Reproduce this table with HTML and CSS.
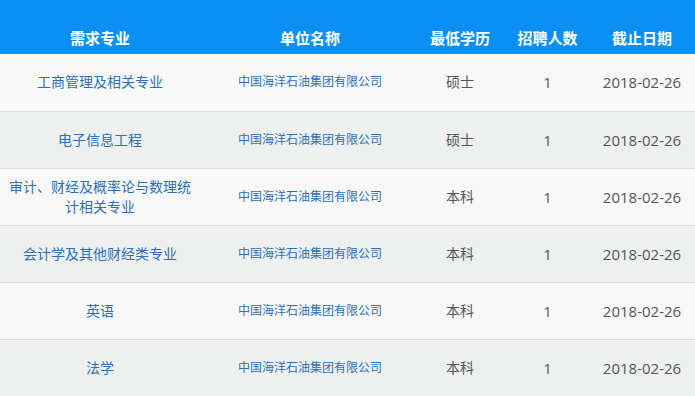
FILE: index.html
```html
<!DOCTYPE html>
<html lang="zh">
<head>
<meta charset="utf-8">
<link rel="stylesheet" href="styles.css">
</head>
<body>
<table class="jobs">
  <colgroup>
    <col class="c1"><col class="c2"><col class="c3"><col class="c4"><col class="c5">
  </colgroup>
  <thead>
    <tr><th>需求专业</th><th>单位名称</th><th>最低学历</th><th>招聘人数</th><th class="date">截止日期</th></tr>
  </thead>
  <tbody>
    <tr><td class="major">工商管理及相关专业</td><td class="org">中国海洋石油集团有限公司</td><td>硕士</td><td class="num">1</td><td class="date">2018-02-26</td></tr>
    <tr><td class="major">电子信息工程</td><td class="org">中国海洋石油集团有限公司</td><td>硕士</td><td class="num">1</td><td class="date">2018-02-26</td></tr>
    <tr><td class="major">审计、财经及概率论与数理统计相关专业</td><td class="org">中国海洋石油集团有限公司</td><td>本科</td><td class="num">1</td><td class="date">2018-02-26</td></tr>
    <tr><td class="major">会计学及其他财经类专业</td><td class="org">中国海洋石油集团有限公司</td><td>本科</td><td class="num">1</td><td class="date">2018-02-26</td></tr>
    <tr><td class="major">英语</td><td class="org">中国海洋石油集团有限公司</td><td>本科</td><td class="num">1</td><td class="date">2018-02-26</td></tr>
    <tr><td class="major">法学</td><td class="org">中国海洋石油集团有限公司</td><td>本科</td><td class="num">1</td><td class="date">2018-02-26</td></tr>
  </tbody>
</table>
</body>
</html>
```
FILE: styles.css
```css
html, body {
  margin: 0;
  padding: 0;
  background: #eeefef;
}
body {
  font-family: "Open Sans", "Noto Sans CJK SC", sans-serif;
  font-size: 14px;
  color: #555;
}
.jobs {
  width: 695px;
  border-collapse: collapse;
  table-layout: fixed;
}
.c1 { width: 200px; }
.c2 { width: 220px; }
.c3 { width: 80px; }
.c4 { width: 95px; }
.c5 { width: 100px; }
.jobs th {
  background: #0a8ff7;
  color: #fff;
  font-weight: bold;
  font-size: 15px;
  line-height: 20px;
  height: 54px;
  box-sizing: border-box;
  padding: 28px 0 6px;
  text-align: center;
  vertical-align: middle;
}
.jobs td {
  height: 57px;
  padding: 0 6px;
  text-align: center;
  vertical-align: middle;
  line-height: 20px;
  border-top: 1px solid #dcdcdc;
  box-sizing: border-box;
}
.jobs th.date, .jobs td.date { padding-right: 6px; padding-left: 0; }
.jobs td.date, .jobs td.num { font-size: 15px; }
.jobs tbody tr:first-child td { border-top: none; }
.jobs tbody tr:nth-child(odd) td { background: #f8f8f8; }
.jobs tbody tr:nth-child(even) td { background: #eeefef; }
.jobs td.major { color: #2b70b9; padding: 0 6px; }
.jobs td.org { color: #2b70b9; font-size: 12px; }
```
